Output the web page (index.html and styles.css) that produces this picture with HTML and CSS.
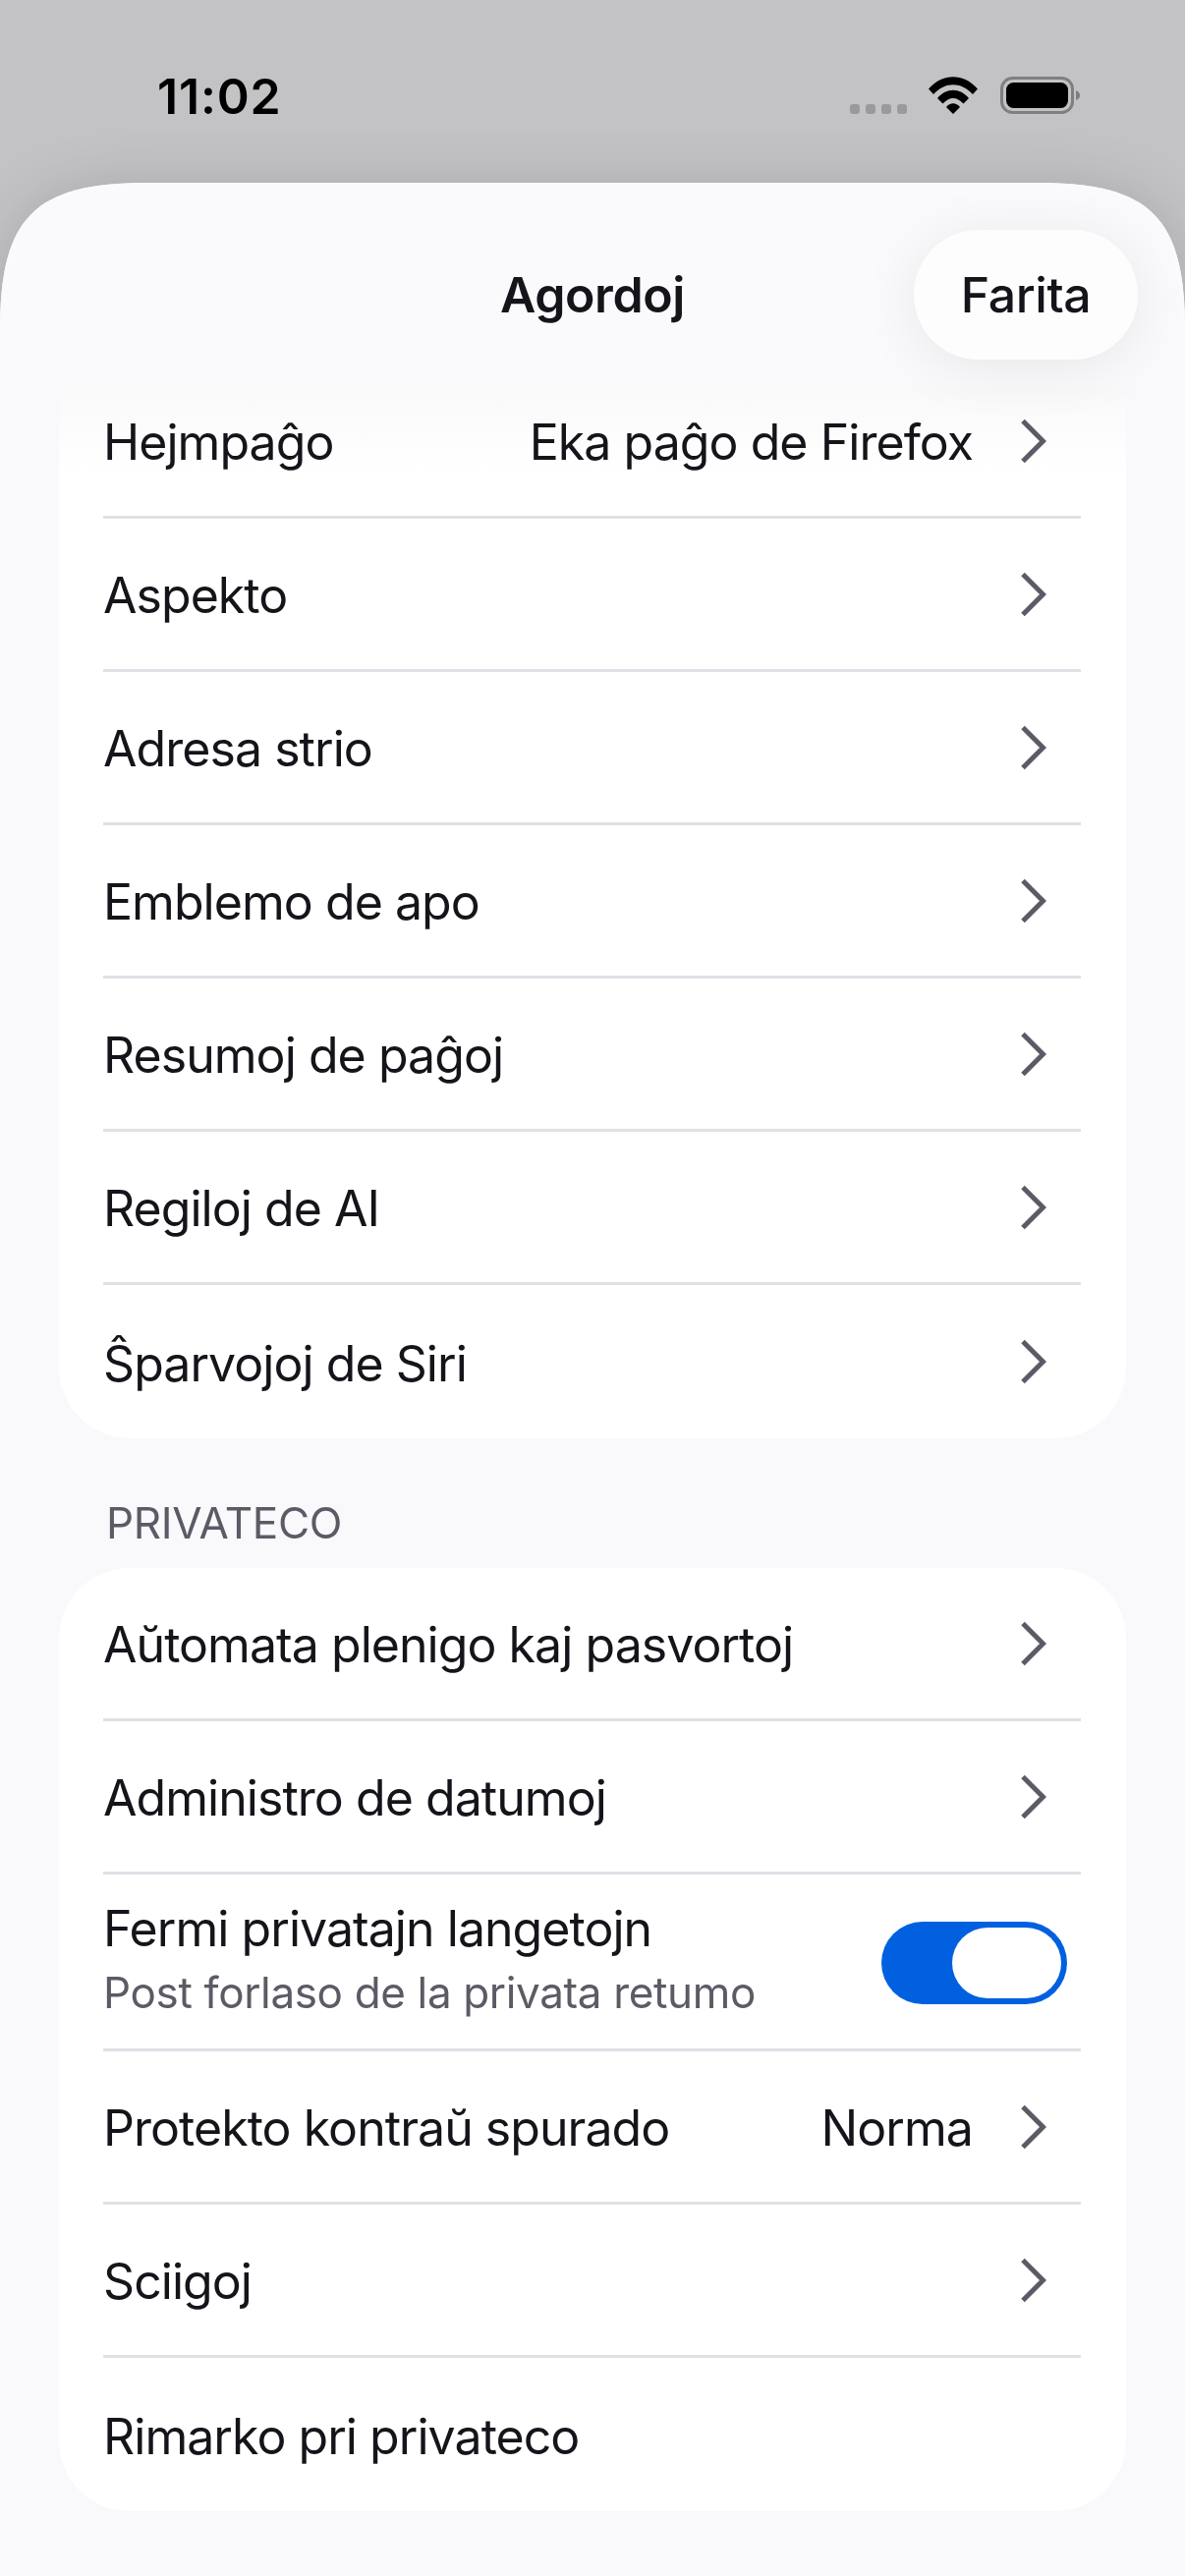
FILE: index.html
```html
<!DOCTYPE html>
<html lang="eo">
<head>
<meta charset="utf-8">
<title>Agordoj</title>
<link rel="stylesheet" href="styles.css">
</head>
<body>
<svg class="defs" width="0" height="0" aria-hidden="true">
  <symbol id="chev" viewBox="0 0 27 46"><path d="M3 2.5 L23.5 23 L3 43.5" fill="none" stroke="#5b5b66" stroke-width="5"/></symbol>
</svg>
<div class="screen">
  <div class="status">
    <span class="time">11:02</span>
    <div class="status-icons">
      <div class="dots"><i></i><i></i><i></i><i></i></div>
      <svg class="wifi" viewBox="0 0 50 38"><path d="M0 12.5 C14 -4 36 -4 50 12.5 L45 18 C33 5 17 5 5 18 Z M9 22 C18 11 32 11 41 22 L35.500 27.500 C29 20 21 20 14.500 27.500 Z M18 31 C22 26 28 26 32 31 L25 38 Z" fill="#000"/></svg>
      <svg class="battery" viewBox="0 0 82 38"><rect x="1.500" y="1.500" width="72" height="35" rx="11" fill="none" stroke="#7f7f80" stroke-width="3"/><rect x="6" y="6" width="63" height="26" rx="7.500" fill="#000"/><path d="M77 14 C80 15 81 17 81 19 C81 21 80 23 77 24 Z" fill="#7f7f80"/></svg>
    </div>
  </div>
  <div class="sheet-shadow">
  <main class="sheet">
    <header class="nav">
      <h1 class="nav-title">Agordoj</h1>
      <button class="done">Farita</button>
    </header>
    <div class="content">
      <ul class="card card-scrolled">
        <li class="row"><span class="label">Hejmpaĝo</span><span class="value">Eka paĝo de Firefox</span><svg class="chevron"><use href="#chev"/></svg></li>
        <li class="row"><span class="label">Aspekto</span><svg class="chevron"><use href="#chev"/></svg></li>
        <li class="row"><span class="label">Adresa strio</span><svg class="chevron"><use href="#chev"/></svg></li>
        <li class="row"><span class="label">Emblemo de apo</span><svg class="chevron"><use href="#chev"/></svg></li>
        <li class="row"><span class="label">Resumoj de paĝoj</span><svg class="chevron"><use href="#chev"/></svg></li>
        <li class="row"><span class="label">Regiloj de AI</span><svg class="chevron"><use href="#chev"/></svg></li>
        <li class="row"><span class="label">Ŝparvojoj de Siri</span><svg class="chevron"><use href="#chev"/></svg></li>
      </ul>
      <h2 class="section">PRIVATECO</h2>
      <ul class="card">
        <li class="row"><span class="label">Aŭtomata plenigo kaj pasvortoj</span><svg class="chevron"><use href="#chev"/></svg></li>
        <li class="row"><span class="label">Administro de datumoj</span><svg class="chevron"><use href="#chev"/></svg></li>
        <li class="row row-tall">
          <div class="label-stack"><span class="label-plain">Fermi privatajn langetojn</span><span class="sub">Post forlaso de la privata retumo</span></div>
          <div class="toggle"><div class="thumb"></div></div>
        </li>
        <li class="row"><span class="label">Protekto kontraŭ spurado</span><span class="value">Norma</span><svg class="chevron"><use href="#chev"/></svg></li>
        <li class="row"><span class="label">Sciigoj</span><svg class="chevron"><use href="#chev"/></svg></li>
        <li class="row"><span class="label">Rimarko pri privateco</span></li>
      </ul>
    </div>
  </main>
  </div>
</div>
</body>
</html>
```
FILE: styles.css
```css
* { box-sizing: border-box; }
html, body { margin: 0; padding: 0; }
body { width: 1206px; height: 2622px; overflow: hidden; font-family: Inter, "Liberation Sans", sans-serif; color: #15141a; }
.defs { position: absolute; }
.screen { height: 2622px; display: flex; flex-direction: column; background: #c3c3c5; }
.status { height: 186px; flex: none; display: flex; justify-content: space-between; align-items: flex-start; padding: 70px 106px 0 160px; }
.time { font-size: 50px; line-height: 56px; font-weight: 600; color: #000; letter-spacing: 0.8px; }
.status-icons { display: flex; align-items: flex-end; margin-top: 8px; height: 38px; }
.dots { display: flex; gap: 6px; margin-right: 22px; }
.dots i { width: 10px; height: 10px; border-radius: 3px; background: #999a9b; }
.wifi { width: 50px; height: 38px; margin-right: 23px; }
.battery { width: 82px; height: 38px; }
.sheet-shadow { flex: 1; filter: drop-shadow(0 0 26px rgba(0,0,0,0.13)); }
.sheet { height: 100%; position: relative; background: #f9f9fb; overflow: hidden; clip-path: path('M0 150 C0 35 35 0 150 0 L1056 0 C1171 0 1206 35 1206 150 L1206 2436 L0 2436 Z'); }
.nav { position: absolute; left: 0; right: 0; top: 0; height: 210px; background: #fafafc; z-index: 1; }
.nav-title { margin: 0; position: absolute; left: 0; right: 0; top: 84px; text-align: center; font-size: 50px; line-height: 60px; font-weight: 600; letter-spacing: -0.4px; color: #15141a; }
.done { position: absolute; left: 930px; top: 48px; width: 228px; height: 132px; border: 0; border-radius: 66px; background: #fdfdfe; font: 500 50px/60px Inter, sans-serif; letter-spacing: -0.4px; color: #15141a; padding: 0; box-shadow: 0 8px 60px rgba(0,0,0,0.08); }
.content { padding: 186px 60px 0; }
.card { list-style: none; margin: 0; padding: 0 46px 0 45px; background: #fff; border-radius: 72px; }
.card-scrolled { border-top-left-radius: 0; border-top-right-radius: 0; background: linear-gradient(#f9f9fa 24px, #fff 110px); }
.row { height: 156px; display: flex; align-items: center; padding-right: 35px; border-bottom: 3px solid #e0e0e6; font-size: 50px; line-height: 60px; letter-spacing: -0.95px; }
.row:last-child { border-bottom: 0; }
.row-tall { height: 180px; padding-right: 14px; }
.label, .value { color: #15141a; margin-top: 3px; }
.label-plain { color: #15141a; margin-top: -5px; }
.label-stack { display: flex; flex-direction: column; }
.sub { font-size: 44px; line-height: 54px; letter-spacing: -0.35px; color: #5b5b66; margin-top: 8px; }
.value { margin-left: auto; margin-right: 48px; }
.chevron { width: 27px; height: 46px; margin-left: auto; flex: none; }
.value + .chevron { margin-left: 0; }
.section { margin: 0; padding: 40px 0 0 48px; height: 132px; display: flex; align-items: center; font-size: 44px; font-weight: 400; letter-spacing: -0.3px; color: #5b5b66; }
.toggle { margin-left: auto; margin-top: 3px; width: 189px; height: 84px; border-radius: 42px; background: #0060df; padding: 6px; display: flex; justify-content: flex-end; }
.thumb { width: 111px; height: 72px; border-radius: 36px; background: #fff; }
```
